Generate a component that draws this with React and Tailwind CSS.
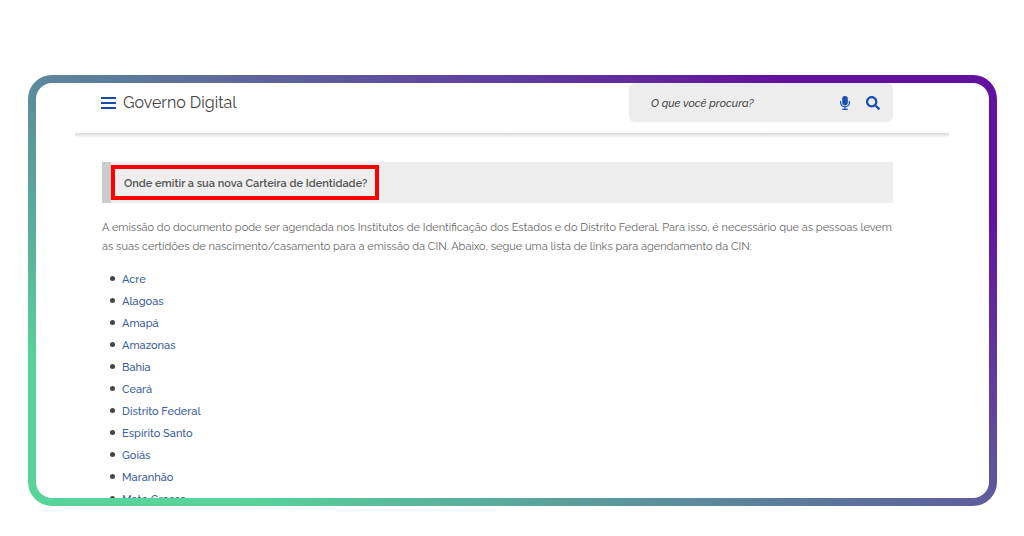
import React from "react";
import { FaSearch } from "react-icons/fa";

const states = [
  "Acre",
  "Alagoas",
  "Amapá",
  "Amazonas",
  "Bahia",
  "Ceará",
  "Distrito Federal",
  "Espírito Santo",
  "Goiás",
  "Maranhão",
  "Mato Grosso",
];

const MicIcon = () => (
  <svg viewBox="0 0 14 14" className="h-[14px] w-[14px]" fill="none" stroke="currentColor">
    <rect x="4.2" y="0" width="5.6" height="9.4" rx="2.8" fill="currentColor" stroke="none" />
    <path d="M2.6 5v1.5a4.4 4.4 0 0 0 8.8 0V5M7 10.8v2.4M4.2 13.3h5.6" strokeWidth="1.2" />
  </svg>
);

const Header = () => (
  <header>
    <div className="flex items-start justify-between pl-[26px] pr-14 pb-[11px]">
      <div className="flex items-center gap-[7px] pt-[6px]">
        <button type="button" aria-label="Menu" className="flex w-[15px] flex-col gap-[3px]">
          <span className="h-[2px] w-full bg-[#1a4aa8]" />
          <span className="h-[2px] w-full bg-[#1a4aa8]" />
          <span className="h-[2px] w-full bg-[#1a4aa8]" />
        </button>
        <span className="text-[16px] leading-7 text-[#444]">Governo Digital</span>
      </div>
      <form className="flex h-[39px] w-[264px] items-center rounded-md bg-[#ededed] pl-[22px] pr-[13px]">
        <input
          type="search"
          aria-label="O que você procura?"
          placeholder="O que você procura?"
          className="min-w-0 flex-1 bg-transparent pt-[3px] text-[11px] font-medium italic placeholder:text-[#444] focus:outline-none"
        />
        <button type="button" aria-label="Busca por voz" className="mr-[14px] text-[#1a4fb0]">
          <MicIcon />
        </button>
        <button type="submit" aria-label="Buscar" className="text-[#1a4fb0]">
          <FaSearch className="h-[14px] w-[14px]" />
        </button>
      </form>
    </div>
    <div className="h-[5px] bg-linear-to-b from-[#d8d8d8] to-white" />
  </header>
);

const App = () => {
  return (
    <div className="h-screen bg-white pt-[75px] pr-[27px] pb-[30px] pl-7 font-['Raleway','Lato',sans-serif]">
      <div className="h-full rounded-3xl bg-[linear-gradient(32deg,#58d49a_13%,#62109f_87%)] p-2">
        <div className="h-full overflow-hidden rounded-2xl bg-white pl-[39px] pr-10">
          <Header />
          <main className="pt-6 pl-[27px] pr-14">
            <h2 className="flex h-[41px] items-center border-l-[9px] border-[#ccc] bg-[#eee]">
              <span className="border-4 border-[#fe0000] px-2 pt-[6px] pb-1 pl-[9px] text-[11px] leading-[17px] font-semibold text-[#555]">
                Onde emitir a sua nova Carteira de Identidade?
              </span>
            </h2>
            <p className="mt-[15px] text-[11px] leading-[19px] text-[#666]">
              A emissão do documento pode ser agendada nos Institutos de Identificação dos Estados e do
              Distrito Federal. Para isso, é necessário que as pessoas levem as suas certidões de
              nascimento/casamento para a emissão da CIN. Abaixo, segue uma lista de links para
              agendamento da CIN:
            </p>
            <ul className="mt-[13px] pl-2">
              {states.map((state) => (
                <li key={state} className="flex items-center gap-[7px] text-[11px] leading-[22px]">
                  <span className="mb-[3px] h-[5px] w-[5px] rounded-full bg-[#444]" />
                  <a href="#" className="font-medium text-[#3c5fa0]">
                    {state}
                  </a>
                </li>
              ))}
            </ul>
          </main>
        </div>
      </div>
    </div>
  );
};

export default App;
